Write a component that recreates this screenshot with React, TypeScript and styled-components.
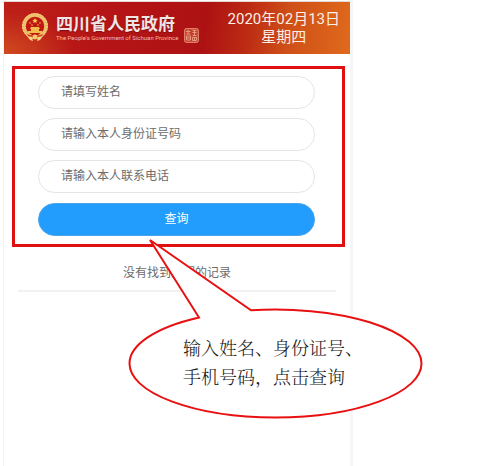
import React, { useState } from 'react';
import styled, { createGlobalStyle } from 'styled-components';

const GlobalStyle = createGlobalStyle`
  * { box-sizing: border-box; }
  body {
    margin: 0;
    background: #fff;
    font-family: Roboto, "Noto Sans CJK SC", sans-serif;
  }
`;

const Page = styled.div`
  position: relative;
  min-height: 100vh;
  padding-left: 3px;
  overflow: hidden;
`;

const Phone = styled.main`
  display: flex;
  flex-direction: column;
  width: 100%;
  max-width: 350px;
  min-height: 100vh;
  padding-top: 1px;
  border-left: 1px solid #f0f5fa;
  border-right: 3px solid #f6f6f7;
`;

const Header = styled.header`
  display: flex;
  align-items: center;
  justify-content: space-between;
  height: 53px;
  padding: 0 10px 0 17px;
  border-top: 1px solid #e9d5d2;
  color: #fbeee6;
  background:
    radial-gradient(ellipse 70px 42px at 0 100%, #d04a20 0%, rgba(200, 45, 25, 0) 100%),
    linear-gradient(97deg, #bd2018 0%, #b51416 30%, #ad1212 58%, #bc2b13 70%, #cf5018 82%, #df6a1c 100%);
`;

const Brand = styled.div`
  display: flex;
  align-items: center;
  gap: 6px;
`;

const BrandText = styled.div`
  display: flex;
  flex-direction: column;
`;

const BrandName = styled.h1`
  margin: 0;
  color: #f1e4e4;
  font-size: 17px;
  line-height: 20px;
  font-weight: 700;
  text-shadow: 0 1px 1px #7b1010;
`;

const BrandSub = styled.span`
  color: #f3b9b0;
  font: 6px/8px Roboto, sans-serif;
  white-space: nowrap;
`;

const Seal = styled.svg`
  align-self: flex-end;
`;

const DateBlock = styled.time`
  font-size: 15px;
  line-height: 18px;
  text-align: center;
  white-space: nowrap;
`;

const QueryForm = styled.form`
  display: flex;
  flex-direction: column;
  gap: 9px;
  margin: 12px 5px 0 8px;
  padding: 7px 27px 8px 23px;
  border: 3px solid #e01010;
`;

const Field = styled.input`
  width: 100%;
  height: 33px;
  padding: 0 22px 1px;
  border: 1px solid #e6e4e6;
  border-radius: 17px;
  outline: none;
  background: #fff;
  color: #555;
  font: 12px/18px Roboto, "Noto Sans CJK SC", sans-serif;
  &::placeholder { color: #6c6c6c; opacity: 1; }
`;

const Submit = styled.button`
  height: 33px;
  margin-top: 1px;
  padding: 0 0 2px;
  border: 1px solid #4ba3ea;
  border-radius: 17px;
  background: #229cfd;
  color: #fff;
  font: 12px/18px Roboto, "Noto Sans CJK SC", sans-serif;
`;

const Result = styled.p`
  margin: 15px 14px 0;
  padding: 2px 0 8px;
  border-bottom: 2px solid #f1f1f1;
  color: #6c6c6c;
  font-size: 12px;
  line-height: 18px;
  text-align: center;
`;

const Callout = styled.aside`
  position: absolute;
  top: 238px;
  left: 128px;
  width: 296px;
`;

const Bubble = styled.svg`
  display: block;
`;

const CalloutText = styled.p`
  position: absolute;
  top: 95px;
  left: 55px;
  margin: 0;
  color: #151515;
  font: 300 18px/29px "Noto Serif CJK SC", "Noto Sans CJK SC", serif;
  white-space: nowrap;
`;

const Emblem = () => (
  <svg width="29" height="30" viewBox="0 0 29 30" aria-hidden="true">
    <circle cx="14" cy="13" r="11" fill="#c11712" stroke="#eebf68" strokeWidth="3.5" />
    <circle cx="14" cy="13" r="12.5" fill="none" stroke="#f6d78b" strokeWidth="1" strokeDasharray="2 1" />
    <path d="M14 5l.8 1.7 1.9.2-1.4 1.3.4 1.9-1.7-.9-1.7.9.4-1.9-1.4-1.3 1.9-.2z" fill="#f8cf55" />
    <g fill="#f3bd4c">
      <circle cx="9" cy="10" r=".8" /><circle cx="19" cy="10" r=".8" />
      <circle cx="11" cy="12" r=".8" /><circle cx="17" cy="12" r=".8" />
      <path d="M10 14h8l1 2h-1v2h3v2H7v-2h3v-2H9z" />
    </g>
    <path d="M6 21q4 2 8 1 4 1 8-1l-2 4-3-1-3 2-3-2-3 1z" fill="#d9391f" />
    <path d="M6 23l5 1 1 4-3-1zm16 0l-5 1-1 4 3-1z" fill="#f5d382" />
    <circle cx="14" cy="24" r="2.4" fill="#f3ca70" />
  </svg>
);

const fields = [
  { name: 'name', type: 'text', label: '请填写姓名' },
  { name: 'idNumber', type: 'text', label: '请输入本人身份证号码' },
  { name: 'phone', type: 'tel', label: '请输入本人联系电话' },
];

export default function App() {
  const [values, setValues] = useState<Record<string, string>>({});
  return (
    <>
      <GlobalStyle />
      <Page>
        <Phone>
          <Header>
            <Brand>
              <Emblem />
              <BrandText>
                <BrandName>四川省人民政府</BrandName>
                <BrandSub>The People's Government of Sichuan Province</BrandSub>
              </BrandText>
              <Seal width="15" height="15" viewBox="0 0 15 15" fill="none" stroke="#e9987e" aria-hidden="true">
                <rect x=".7" y=".7" width="13.6" height="13.6" rx="1.5" fill="#c43d2c" />
                <path d="M2 3.5h4.500M4 2v4M2.500 6h4M2.500 8h4v4h-4zM2.500 10h4M8.500 2.500h4M8.500 4.500h4M10.500 2v5M8.500 7.500h4M8.500 9.500h4v3h-4zM10.500 9v4" />
              </Seal>
            </Brand>
            <DateBlock dateTime="2020-02-13">2020年02月13日<br />星期四</DateBlock>
          </Header>
          <QueryForm onSubmit={(e: React.FormEvent) => e.preventDefault()}>
            {fields.map((f) => (
              <Field
                key={f.name}
                name={f.name}
                type={f.type}
                aria-label={f.label}
                placeholder={f.label}
                value={values[f.name] ?? ''}
                onChange={(e: React.ChangeEvent<HTMLInputElement>) => setValues({ ...values, [f.name]: e.target.value })}
              />
            ))}
            <Submit type="submit">查询</Submit>
          </QueryForm>
          <Result>没有找到您们的记录</Result>
        </Phone>
        <Callout>
          <Bubble width="296" height="182" viewBox="0 0 296 182" aria-hidden="true">
            <path
              d="M22 2L71 79.500A146 54 0 0 0 1.500 125.500A146 54 0 0 0 293.500 125.500A146 54 0 0 0 123 72.300Z"
              fill="#fff"
              stroke="#e81010"
              strokeWidth="2"
            />
          </Bubble>
          <CalloutText>输入姓名、身份证号、<br />手机号码，点击查询</CalloutText>
        </Callout>
      </Page>
    </>
  );
}
